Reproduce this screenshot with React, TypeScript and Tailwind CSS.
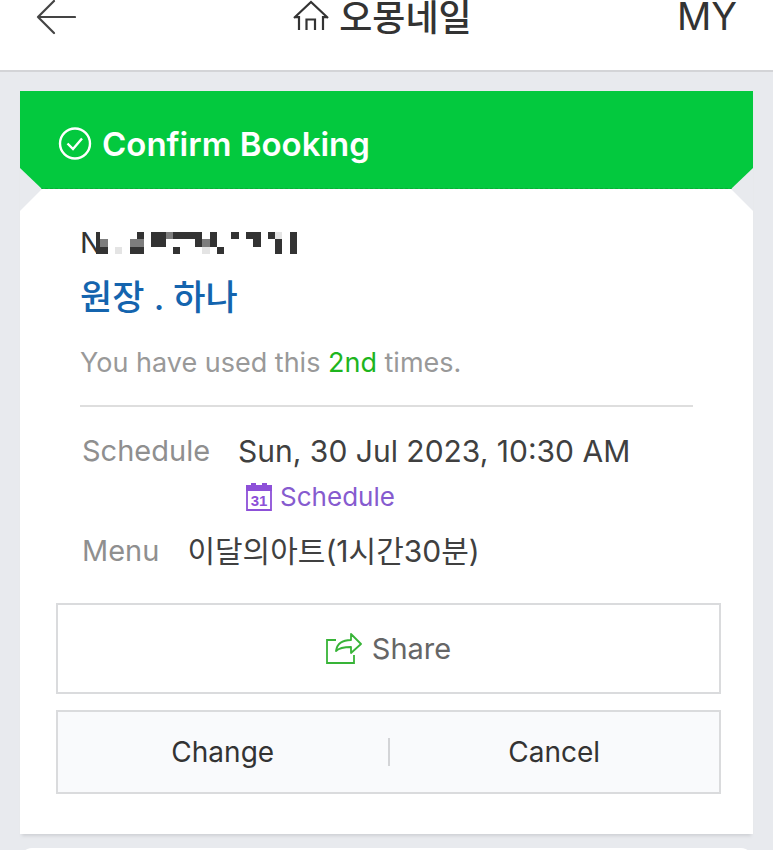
import type { ReactNode } from 'react'

const INK = '#333333'
const MID = '#7d7d7d'
const PALE = '#e4e4e4'

// [column, row, width, colour] on a 27 x 3 grid
const maskedCells: [number, number, number, string][] = [
  [5, 0, 1, INK], [7, 0, 2, INK], [9, 0, 1, MID], [10, 0, 4, INK], [15, 0, 1, INK],
  [18, 0, 1, INK], [20, 0, 2, INK], [23, 0, 1, INK], [24, 0, 1, PALE], [26, 0, 1, INK],
  [0, 1, 1, MID], [4, 1, 2, MID], [7, 1, 2, INK], [13, 1, 1, INK], [14, 1, 1, MID],
  [15, 1, 1, INK], [21, 1, 1, INK], [24, 1, 1, INK], [26, 1, 1, INK],
  [0, 2, 1, INK], [2, 2, 1, PALE], [4, 2, 2, INK], [10, 2, 1, INK], [14, 2, 1, PALE],
  [16, 2, 1, INK], [24, 2, 1, INK], [26, 2, 1, INK],
]

function MaskedName() {
  return (
    <div className="flex h-9 items-center text-[29px] leading-9 text-[#333333]">
      <span>N</span>
      <svg className="-ml-1.5 h-[22px] w-[201px]" viewBox="-0.6 0 27.6 3" preserveAspectRatio="none" shapeRendering="crispEdges" aria-hidden="true">
        <rect x="-0.6" y="0" width="0.6" height="3" fill={INK} />
        {maskedCells.map(([x, y, w, fill]) => (
          <rect key={`${x}-${y}`} x={x} y={y} width={w} height="1" fill={fill} />
        ))}
      </svg>
    </div>
  )
}

function Row({ label, children }: { label: string; children: ReactNode }) {
  return (
    <div className="flex gap-7">
      <dt className="text-[29px] text-[#8f8f8f]">{label}</dt>
      <dd className="text-[30px] text-[#404040]">{children}</dd>
    </div>
  )
}

export default function App() {
  return (
    <div className="min-h-screen bg-[#e8eaee] font-[Inter,'Noto_Sans_CJK_KR',sans-serif]">
      <header className="grid h-[72px] grid-cols-[1fr_auto_1fr] items-start border-b-2 border-[#d3d4d7] bg-white px-9 text-[#333333]">
        <button type="button" aria-label="Back" className="justify-self-start">
          <svg className="h-9 w-10" viewBox="0 0 40 36" fill="none" stroke="#444" strokeWidth="2.2" strokeLinecap="round" strokeLinejoin="round">
            <path d="M39 17H2M18 1L2 17l16 16" />
          </svg>
        </button>
        <a href="#home" className="mr-2 flex h-9 items-center gap-2.5 text-[36px] leading-9 font-medium">
          <svg className="h-9 w-9" viewBox="0 0 36 36" fill="none" stroke="#333" strokeWidth="2.2">
            <path d="M1 18L18 2l17 16M2 17.200h4V30M34 17.200h-4V30M13.500 30V19.500h8.500V30" />
          </svg>
          <h1>오몽네일</h1>
        </a>
        <a href="#my" className="justify-self-end text-[38px] leading-8">MY</a>
      </header>

      <main className="px-5 pt-[19px]">
        <article className="shadow-[0_4px_3px_-2px_#cfd1d5]">
          <div className="bg-[#e8eaee]">
            <div className="flex h-[98px] items-center gap-2.5 border-b border-dashed border-[#09ad35] bg-[#03c93e] px-[38px] pt-2 text-white [clip-path:polygon(0_0,100%_0,100%_77px,calc(100%-22px)_100%,22px_100%,0_77px)]">
              <svg className="h-[34px] w-[34px]" viewBox="0 0 34 34" fill="none" stroke="currentColor" strokeWidth="2.4">
                <circle cx="17" cy="16.500" r="15" />
                <path d="M9.500 16.500l5.500 5.500L24 11.500" />
              </svg>
              <h2 className="text-[33px] leading-10 font-semibold">Confirm Booking</h2>
            </div>
            <div className="bg-white pt-9 pr-8 pb-10 pl-9 [clip-path:polygon(22px_0,calc(100%-22px)_0,100%_22px,100%_100%,0_100%,0_22px)]">
              <div className="mr-7 ml-6 border-b-2 border-[#dedede] pb-6">
                <MaskedName />
                <p className="mt-4 text-[35px] leading-10 font-medium text-[#1464ae]">원장 . 하나</p>
                <p className="mt-7 text-[27px] leading-9 text-[#999999]">
                  You have used this <span className="text-[#1eb51e]">2nd</span> times.
                </p>
              </div>

              <dl className="mx-[26px] mt-6 leading-10">
                <Row label="Schedule">
                  Sun, 30 Jul 2023, 10:30 AM
                  <a href="#schedule" className="mt-2 ml-2 flex items-center gap-2 text-[26px] leading-9 text-[#865bcf]">
                    <svg className="h-7 w-[26px]" viewBox="0 0 26 28" aria-hidden="true">
                      <path d="M1 3h24v24H1z" fill="none" stroke="#8d50d8" strokeWidth="1.8" />
                      <path d="M0 2h5V0h5v2h6V0h5v2h5v6H0z" fill="#8d50d8" />
                      <text x="13" y="23" textAnchor="middle" fontFamily="Liberation Sans, sans-serif" fontSize="15" fontWeight="700" fill="#8d50d8">31</text>
                    </svg>
                    Schedule
                  </a>
                </Row>
                <div className="h-4" />
                <Row label="Menu">이달의아트(1시간30분)</Row>
              </dl>

              <button type="button" className="mt-8 flex h-[91px] w-full items-center justify-center gap-2.5 border-2 border-[#dadbdd] bg-white text-[29px] leading-9 text-[#666666]">
                <svg className="h-[31px] w-9" viewBox="0 0 36 31" fill="none" stroke="#38b438" strokeWidth="1.8">
                  <path d="M10 7H1v23h27v-8" />
                  <path d="M10 18c1-7 6-11 15-11V1l10 10-10 9v-6c-7 0-12 1-15 4z" strokeLinejoin="round" />
                </svg>
                Share
              </button>
              <div className="mt-4 grid h-[84px] grid-cols-[1fr_2px_1fr] items-center border-2 border-[#dadbdd] bg-[#f9fafc] text-[28px] leading-9 text-[#333333]">
                <button type="button" className="h-full">Change</button>
                <div className="h-7 bg-[#d3d4d7]" />
                <button type="button" className="h-full">Cancel</button>
              </div>
            </div>
          </div>
        </article>
        <section className="mt-[14px] h-10 rounded-t-xl bg-white" />
      </main>
    </div>
  )
}
